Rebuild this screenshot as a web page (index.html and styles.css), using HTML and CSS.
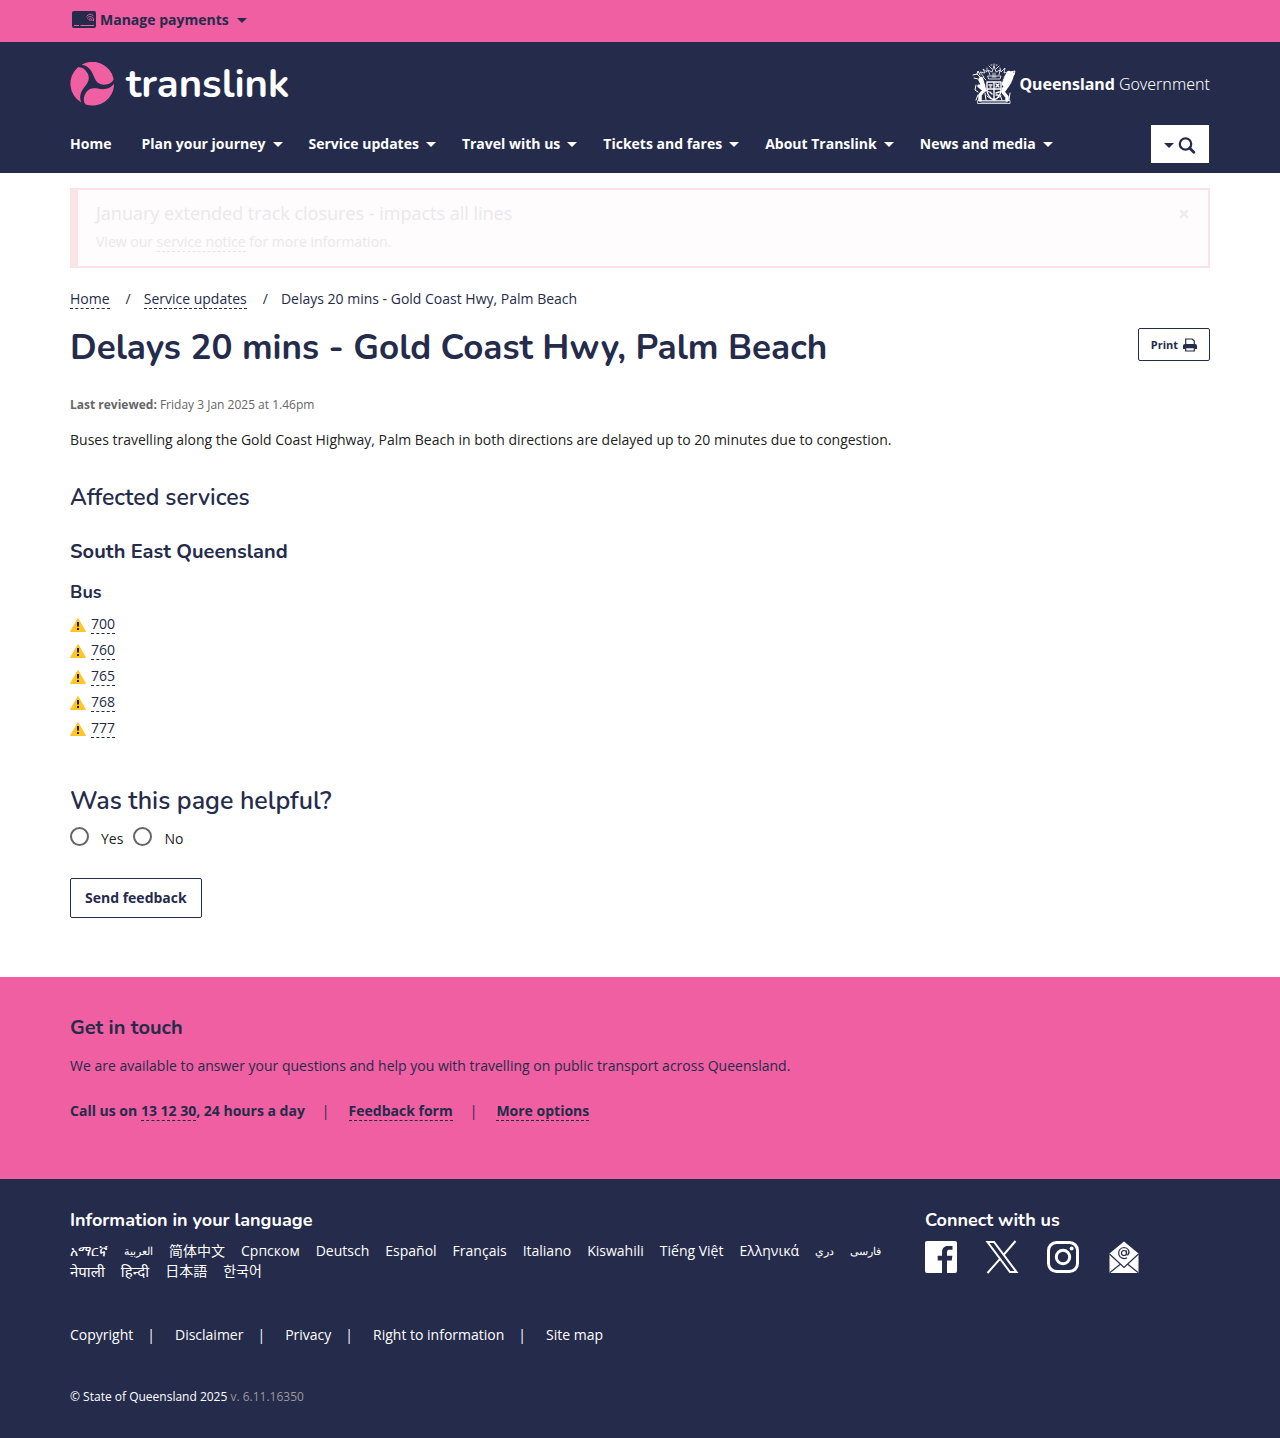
FILE: index.html
```html
<!DOCTYPE html>
<html lang="en">
<head>
<meta charset="utf-8">
<meta name="viewport" content="width=device-width, initial-scale=1">
<title>Delays 20 mins - Gold Coast Hwy, Palm Beach | Translink</title>
<link rel="stylesheet" href="styles.css">
</head>
<body>
<div class="topbar">
  <div class="container">
    <button class="payments" type="button">
      <svg class="card-icon" viewBox="0 0 26 18" aria-hidden="true">
        <rect x="2" y="0" width="24" height="17" rx="2" fill="#252b4b"/>
        <path d="M4 14.500h5M10.500 14.500H24" stroke="#ef5fa1" stroke-width="1"/>
        <g fill="none" stroke="#ef5fa1" stroke-width=".9"><path d="M16.500 5.500Q20 1 23.500 5M17 7.500q3-4 6.500 0V10M18.500 8.500q2-2 3.500 0V10M20 10V8.500"/></g>
      </svg>
      <span>Manage payments</span>
      <span class="caret"></span>
    </button>
  </div>
</div>

<header class="header">
  <div class="container">
    <div class="brand-row">
      <a class="brand" href="#">
        <svg class="brand-mark" viewBox="-67 -65 132 132" aria-hidden="true">
          <g fill="#ef5fa1">
            <path id="petal" d="M-32-57A65 65 0 0 1 64-14C60-2 48 3 35 3C18 3 10-8 5-21C-3-42-12-54-32-57Z"/>
            <use href="#petal" transform="rotate(120)"/>
            <use href="#petal" transform="rotate(240)"/>
          </g>
        </svg>
        <span>translink</span>
      </a>
      <a class="government" href="#">
        <svg class="crest" viewBox="0 0 44 42" aria-hidden="true">
          <g fill="none" stroke="#fff" stroke-linecap="round" stroke-linejoin="round">
            <path stroke-width="3.500" d="M8 17q3 3 3 7M7 23l5 4-4 5v5M34 24l-3 5 4 5v3"/>
            <path stroke-width="4.500" d="M9 16l3 11M40 11q-2 9-8 15M37 10l-5 11"/>
            <path stroke-width="1" d="M1 12l4-1 3 3M2 15l4 1M5 11l1-3 2 4M38 9l5-1-1 4-4 4M12 26l5 3M32 27l-5 2M4 22l-1 5 3 2M6 32l-2 5M13 30l1 7M38 30l-1 7M28 32l2 5M15 33l4 3M29 33l-5 3"/>
            <path stroke-width="1.400" d="M15 19h14v9q-1 6-7 9-6-3-7-9zM22 19v17M15 26h14M17 22h3M18 24h1M24 21l3 3M27 21l-3 3M18 29l2 2M24 30l3-1M24 32h2"/>
            <path stroke-width=".8" d="M17 16h11l1-3H16zM18 12l-2-5 4 2 2-6 2 6 4-2-1 5M12 14l-4-5 5 1-2-4 4 3V5M32 14l4-5-4 1 1-5-4 4-1-4M14 17l-3-3M31 17l3-4M17 3l3 3M27 3l-3 3M22 1v2M19 2h1M24 2h1M10 19l3 3M33 19l-3 3M20 14h4M21 10v3M23 10v3"/>
            <path stroke-width=".8" d="M6 37.500h32v3H6zM9 39h26"/>
          </g>
        </svg>
        <span><b>Queensland</b> Government</span>
      </a>
    </div>
    <div class="nav-row">
      <nav class="nav" aria-label="Main">
        <a href="#">Home</a>
        <a href="#">Plan your journey <span class="caret"></span></a>
        <a href="#">Service updates <span class="caret"></span></a>
        <a href="#">Travel with us <span class="caret"></span></a>
        <a href="#">Tickets and fares <span class="caret"></span></a>
        <a href="#">About Translink <span class="caret"></span></a>
        <a href="#">News and media <span class="caret"></span></a>
      </nav>
      <button class="search" type="button" aria-label="Search">
        <span class="caret"></span>
        <svg viewBox="0 0 18 18" aria-hidden="true"><circle cx="7.500" cy="8" r="5.700" fill="none" stroke="#252b4b" stroke-width="2.300"/><path d="M11.800 12.300l4 4" stroke="#252b4b" stroke-width="2.800" stroke-linecap="round"/></svg>
      </button>
    </div>
  </div>
</header>

<main class="container">
  <div class="alert">
    <div>
      <h2>January extended track closures - impacts all lines</h2>
      <p>View our <a href="#">service notice</a> for more information.</p>
    </div>
    <button type="button" aria-label="Close">
      <svg viewBox="0 0 12 12" aria-hidden="true"><path d="M2 2l8 8M10 2l-8 8" stroke="#ececee" stroke-width="2.300"/></svg>
    </button>
  </div>

  <ol class="breadcrumb">
    <li><a class="link" href="#">Home</a></li>
    <li><a class="link" href="#">Service updates</a></li>
    <li>Delays 20 mins - Gold Coast Hwy, Palm Beach</li>
  </ol>

  <div class="title-row">
    <h1>Delays 20 mins - Gold Coast Hwy, Palm Beach</h1>
    <button class="print" type="button">Print
      <svg viewBox="0 0 14 14" aria-hidden="true"><path d="M2.700 6V1h6.500l2.100 2.100V6" fill="none" stroke="#252b4b" stroke-width="1.200"/><path d="M2 6h10a2 2 0 0 1 2 2V11h-2.500V9h-9v2H0V8a2 2 0 0 1 2-2z" fill="#252b4b"/><path d="M2.700 9.700h8.600V13H2.700z" fill="#fff" stroke="#252b4b" stroke-width="1.200"/></svg>
    </button>
  </div>

  <p class="reviewed"><b>Last reviewed:</b> Friday 3 Jan 2025 at 1.46pm</p>
  <p class="summary">Buses travelling along the Gold Coast Highway, Palm Beach in both directions are delayed up to 20 minutes due to congestion.</p>

  <section class="affected">
    <h2>Affected services</h2>
    <h3>South East Queensland</h3>
    <h4>Bus</h4>
    <svg class="defs" aria-hidden="true"><symbol id="warning" viewBox="0 0 16 14"><path d="M8 .5L15.500 13.500H.5z" fill="#ffc629" stroke="#ffc629" stroke-linejoin="round"/><path d="M7 4h2v4.500H7zM7 10h2v2H7z" fill="#252020"/></symbol></svg>
    <ul>
      <li><svg><use href="#warning"/></svg><a class="link" href="#">700</a></li>
      <li><svg><use href="#warning"/></svg><a class="link" href="#">760</a></li>
      <li><svg><use href="#warning"/></svg><a class="link" href="#">765</a></li>
      <li><svg><use href="#warning"/></svg><a class="link" href="#">768</a></li>
      <li><svg><use href="#warning"/></svg><a class="link" href="#">777</a></li>
    </ul>
  </section>

  <form class="feedback">
    <fieldset>
      <legend>Was this page helpful?</legend>
      <div class="choices">
        <input type="radio" name="helpful" id="helpful-yes"><label for="helpful-yes">Yes</label>
        <input type="radio" name="helpful" id="helpful-no"><label for="helpful-no">No</label>
      </div>
    </fieldset>
    <button type="button">Send feedback</button>
  </form>
</main>

<section class="touch">
  <div class="container">
    <h2>Get in touch</h2>
    <p>We are available to answer your questions and help you with travelling on public transport across Queensland.</p>
    <ul>
      <li>Call us on <a class="link" href="#">13 12 30</a>, 24 hours a day</li>
      <li><a class="link" href="#">Feedback form</a></li>
      <li><a class="link" href="#">More options</a></li>
    </ul>
  </div>
</section>

<footer class="footer">
  <div class="container">
    <div class="footer-top">
      <section class="languages">
        <h2>Information in your language</h2>
        <div class="language-list">
          <a href="#" lang="am">አማርኛ</a>
          <a href="#" lang="ar" class="arabic">العربية</a>
          <a href="#" lang="zh-Hans">简体中文</a>
          <a href="#" lang="sr">Српском</a>
          <a href="#" lang="de">Deutsch</a>
          <a href="#" lang="es">Español</a>
          <a href="#" lang="fr">Français</a>
          <a href="#" lang="it">Italiano</a>
          <a href="#" lang="sw">Kiswahili</a>
          <a href="#" lang="vi">Tiếng Việt</a>
          <a href="#" lang="el">Ελληνικά</a>
          <a href="#" lang="prs" class="arabic">دري</a>
          <a href="#" lang="fa" class="arabic">فارسی</a>
          <a href="#" lang="ne" class="devanagari">नेपाली</a>
          <a href="#" lang="hi" class="devanagari">हिन्दी</a>
          <a href="#" lang="ja">日本語</a>
          <a href="#" lang="ko">한국어</a>
        </div>
      </section>
      <section class="connect">
        <h2>Connect with us</h2>
        <div class="social">
          <a href="#" aria-label="Facebook"><svg viewBox="0 0 34 34"><path fill="#fff" d="M3 1h28a2 2 0 0 1 2 2v28a2 2 0 0 1-2 2h-8V20.500h4.700l.7-4.700H23v-3.500c0-2 1-2.500 2.500-2.500H28.500V5.900h-4.500c-4 0-6 2.500-6 6.200v3.700h-4.300v4.700H18V33H3a2 2 0 0 1-2-2V3a2 2 0 0 1 2-2z"/></svg></a>
          <a href="#" aria-label="X"><svg viewBox="0 0 34 34"><path fill="none" stroke="#fff" stroke-width="2" d="M2.500 2H9L31.500 32H25zM30.500 1L18.500 15M14.800 19.200L2.500 33"/></svg></a>
          <a href="#" aria-label="Instagram"><svg viewBox="0 0 34 34"><rect x="2.500" y="2.500" width="29" height="29" rx="8" fill="none" stroke="#fff" stroke-width="3"/><circle cx="17" cy="17" r="6.700" fill="none" stroke="#fff" stroke-width="3"/><circle cx="25.600" cy="8.400" r="2" fill="#fff"/></svg></a>
          <a href="#" aria-label="Email"><svg viewBox="0 0 34 34"><path fill="#fff" d="M17 1.500L31.500 13.500V32q0 1-1 1h-27q-1 0-1-1V13.500z"/><path fill="none" stroke="#252b4b" stroke-width="1.200" d="M2.500 14L17 27.500 31.500 14M3 32.500l10.500-8.500M31 32.500L20.500 24"/><g fill="none" stroke="#252b4b" stroke-width="1.200"><circle cx="17" cy="13" r="2.500"/><path d="M19.500 10.500v3.500q.3 1.500 1.500.7 1.800-2 .5-4.700-1.500-2.500-4.500-2.500a5.500 5.500 0 1 0 3 10.200"/></g></svg></a>
        </div>
      </section>
    </div>
    <ul class="legal">
      <li><a href="#">Copyright</a></li>
      <li><a href="#">Disclaimer</a></li>
      <li><a href="#">Privacy</a></li>
      <li><a href="#">Right to information</a></li>
      <li><a href="#">Site map</a></li>
    </ul>
    <p class="copyright"><a href="#">© State of Queensland 2025</a> v. 6.11.16350</p>
  </div>
</footer>
</body>
</html>
```

FILE: styles.css
```css
:root {
  --navy: #252b4b;
  --pink: #ef5fa1;
  --body-font: "Open Sans", "Noto Sans", "Noto Sans CJK SC", sans-serif;
  --heading-font: "Nunito", "Open Sans", sans-serif;
}

* { box-sizing: border-box; }

body {
  margin: 0;
  background: #fff;
  color: #222;
  font: 400 14px/20px var(--body-font);
}

h1, h2, h3, h4, p, ul, ol { margin: 0; padding: 0; }
ul, ol { list-style: none; }
h1, h2, h3, h4, legend { color: var(--navy); font-family: var(--heading-font); font-weight: 700; }
a { color: inherit; text-decoration: none; }
button { cursor: pointer; font-family: inherit; color: var(--navy); }
svg { display: block; flex: none; }

.container { max-width: 1170px; margin: 0 auto; padding: 0 15px; }
.link { border-bottom: 1px dashed var(--navy); }

.caret {
  display: inline-block;
  border: 5px solid transparent;
  border-top-color: currentColor;
  border-bottom: 0;
}

/* Payments bar */
.topbar { height: 42px; background: var(--pink); }
.payments {
  display: flex;
  align-items: center;
  gap: 4px;
  padding: 10px 0 8px;
  border: 0;
  background: none;
  font-size: 14px;
  line-height: 20px;
  font-weight: 700;
}
.payments .caret { margin-left: 4px; }
.card-icon { width: 26px; height: 18px; }

/* Header */
.header { background: var(--navy); color: #fff; }
.brand-row {
  display: flex;
  justify-content: space-between;
  align-items: center;
  padding-top: 20px;
}
.brand {
  display: flex;
  align-items: center;
  gap: 12px;
  font: 700 40px/44px "Nunito", Lato, sans-serif;
}
.brand-mark { width: 44px; height: 44px; }
.government {
  display: flex;
  align-items: center;
  gap: 3px;
  font: 300 16px/42px "Noto Sans", sans-serif;
}
.government b { font-weight: 700; }
.crest { width: 44px; height: 42px; }
.nav-row {
  display: flex;
  justify-content: space-between;
  align-items: center;
  padding: 19px 1px 10px 0;
}
.nav { display: flex; gap: 26px; font-weight: 700; }
.nav a { display: flex; align-items: center; gap: 7px; }
.nav a:first-child { margin-right: 4px; }
.search {
  display: flex;
  align-items: center;
  justify-content: center;
  gap: 4px;
  width: 58px;
  height: 38px;
  padding: 2px 0 0;
  border: 0;
  background: #fff;
}
.search svg { width: 18px; height: 18px; }

/* Fading notice */
.alert {
  display: flex;
  justify-content: space-between;
  align-items: flex-start;
  margin-top: 15px;
  padding: 11px 18px 14px;
  border: 2px solid #fbe4e7;
  border-left-width: 8px;
  background: #fefcfc;
  color: #e9e9eb;
}
.alert h2 { color: inherit; font: 400 18px/24px var(--body-font); }
.alert p { margin-top: 7px; }
.alert a { border-bottom: 1px dashed #e4e4e9; }
.alert button { margin: 7px 0 0; padding: 0; border: 0; background: none; }
.alert button svg { width: 12px; height: 12px; }

.breadcrumb { display: flex; margin-top: 21px; color: var(--navy); }
.breadcrumb li + li::before { content: "/"; padding: 0 13px 0 16px; }

.title-row {
  display: flex;
  justify-content: space-between;
  align-items: flex-start;
  margin-top: 19px;
}
.title-row h1 { font-size: 35px; line-height: 40px; }
.print {
  display: flex;
  align-items: center;
  gap: 5px;
  height: 33px;
  padding: 0 12px;
  border: 1px solid var(--navy);
  border-radius: 2px;
  background: #fff;
  font-size: 11px;
  font-weight: 700;
}
.print svg { width: 14px; height: 14px; }

.reviewed { margin-top: 27px; color: #666; font-size: 12px; }
.reviewed b { font-weight: 700; }
.summary { margin-top: 15px; }

.affected h2 { margin-top: 33px; font-size: 23px; line-height: 30px; font-weight: 600; }
.affected h3 { margin-top: 26px; font-size: 20px; line-height: 26px; }
.affected h4 { margin-top: 15px; font-size: 18px; line-height: 24px; }
.affected ul { margin-top: 7px; }
.affected li { display: flex; align-items: center; gap: 5px; height: 26px; }
.affected li svg { width: 16px; height: 14px; margin-top: 2px; }
.affected .link { line-height: 19px; color: var(--navy); }
.defs { width: 0; height: 0; }

.feedback { margin-top: 44px; padding-bottom: 59px; }
.feedback fieldset { margin: 0; padding: 0; border: 0; }
.feedback legend { padding: 0; font-size: 25px; line-height: 32px; font-weight: 600; }
.choices { display: flex; align-items: flex-start; padding-top: 10px; }
.choices input {
  appearance: none;
  width: 19px;
  height: 19px;
  margin: 0 12px 0 0;
  border: 2px solid #666;
  border-radius: 50%;
  background: #fff;
}
.choices input:checked { background: #666; box-shadow: inset 0 0 0 3px #fff; }
.choices label { margin-right: 10px; padding-top: 2px; color: #222; }
.feedback > button {
  height: 40px;
  margin-top: 29px;
  padding: 0 14px 2px;
  border: 1px solid var(--navy);
  border-radius: 2px;
  background: #fff;
  font-size: 14px;
  font-weight: 700;
}

/* Contact band */
.touch { padding: 37px 0 58px; background: var(--pink); color: var(--navy); }
.touch h2 { font-size: 20px; line-height: 28px; }
.touch p { margin-top: 14px; }
.touch ul { display: flex; margin-top: 25px; font-weight: 700; }
.touch li + li::before { content: "|"; padding: 0 19px 0 17px; font-weight: 400; }

/* Footer */
.footer { padding: 28px 0 31px; background: var(--navy); color: #fff; }
.footer h2 { color: #fff; font-size: 18px; line-height: 26px; }
.footer-top { display: grid; grid-template-columns: 3fr 1fr; }
.language-list { display: flex; flex-wrap: wrap; column-gap: 16px; max-width: 825px; margin-top: 8px; }
.language-list a { height: 20px; }
.language-list .arabic { font-size: 11px; }
.language-list .devanagari { font-size: 15px; }
.social { display: flex; gap: 27px; margin: 7px 0 0 -1px; }
.social svg { width: 34px; height: 34px; }
.legal { display: flex; margin-top: 44px; }
.legal li + li::before { content: "|"; padding: 0 20px 0 14px; }
.copyright { margin-top: 42px; color: #999; font-size: 12px; }
.copyright a { color: #fff; }
```
